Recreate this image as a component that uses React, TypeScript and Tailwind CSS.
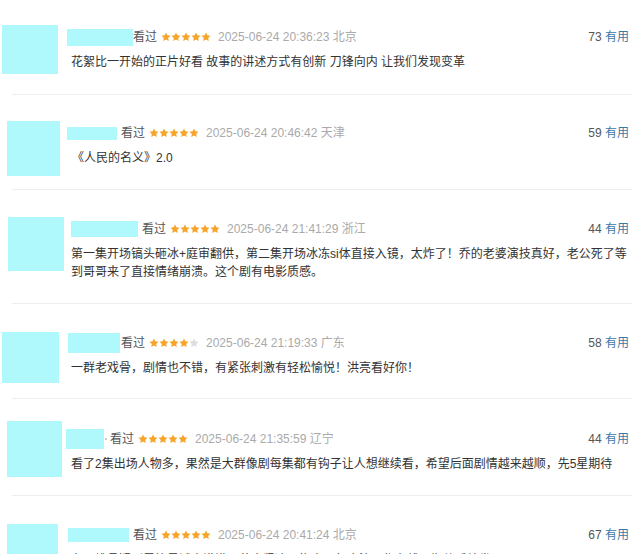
import React from 'react';

type Row = {
  rowClass: string;
  avatarClass: string;
  colClass: string;
  nameClass: string;
  gapClass: string;
  textClass: string;
  stars: number;
  time: string;
  city: string;
  useful: number;
  dot?: boolean;
  lines: string[];
};

const rows: Row[] = [
  {
    rowClass: 'h-[94px]',
    avatarClass: 'ml-[2px] mt-[25px] w-[56px] h-[49px]',
    colClass: 'ml-[9px] pt-[27px]',
    nameClass: 'w-[66px] h-[17px]',
    gapClass: 'ml-0',
    textClass: 'pl-[4px]',
    stars: 5,
    time: '2025-06-24 20:36:23',
    city: '北京',
    useful: 73,
    lines: ['花絮比一开始的正片好看 故事的讲述方式有创新 刀锋向内 让我们发现变革'],
  },
  {
    rowClass: 'h-[94px]',
    avatarClass: 'ml-[7px] mt-[26px] w-[53px] h-[55px]',
    colClass: 'ml-[7px] pt-[28px]',
    nameClass: 'w-[50px] h-[13px]',
    gapClass: 'ml-[4px]',
    textClass: 'pl-[5px]',
    stars: 5,
    time: '2025-06-24 20:46:42',
    city: '天津',
    useful: 59,
    lines: ['《人民的名义》2.0'],
  },
  {
    rowClass: 'h-[113px]',
    avatarClass: 'ml-[8px] mt-[27px] w-[56px] h-[54px]',
    colClass: 'ml-[7px] pt-[29px]',
    nameClass: 'w-[67px] h-[16px]',
    gapClass: 'ml-[4px]',
    textClass: 'pl-0',
    stars: 5,
    time: '2025-06-24 21:41:29',
    city: '浙江',
    useful: 44,
    lines: [
      '第一集开场镐头砸冰+庭审翻供，第二集开场冰冻si体直接入镜，太炸了！乔的老婆演技真好，老公死了等',
      '到哥哥来了直接情绪崩溃。这个剧有电影质感。',
    ],
  },
  {
    rowClass: 'h-[94px]',
    avatarClass: 'ml-[2px] mt-[28px] w-[57px] h-[51px]',
    colClass: 'ml-[9px] pt-[29px]',
    nameClass: 'w-[52px] h-[20px]',
    gapClass: 'ml-[1px]',
    textClass: 'pl-[3px]',
    stars: 4,
    time: '2025-06-24 21:19:33',
    city: '广东',
    useful: 58,
    lines: ['一群老戏骨，剧情也不错，有紧张刺激有轻松愉悦！洪亮看好你！'],
  },
  {
    rowClass: 'h-[96px]',
    avatarClass: 'ml-[7px] mt-[22px] w-[55px] h-[56px]',
    colClass: 'ml-[4px] pt-[30px]',
    nameClass: 'w-[38px] h-[20px]',
    gapClass: 'ml-[3px]',
    textClass: 'pl-[5px]',
    stars: 5,
    time: '2025-06-24 21:35:59',
    city: '辽宁',
    useful: 44,
    dot: true,
    lines: ['看了2集出场人物多，果然是大群像剧每集都有钩子让人想继续看，希望后面剧情越来越顺，先5星期待'],
  },
  {
    rowClass: 'h-[80px]',
    avatarClass: 'ml-[7px] mt-[28px] w-[51px] h-[40px]',
    colClass: 'ml-[10px] pt-[29px]',
    nameClass: 'w-[61px] h-[14px]',
    gapClass: 'ml-[4px]',
    textClass: 'pl-[3px]',
    stars: 5,
    time: '2025-06-24 20:41:24',
    city: '北京',
    useful: 67,
    lines: ['在一堆悬疑剧里算是诚意满满，节奏紧凑不拖沓，每个演员都在线，期待后续发展'],
  },
];

const Star: React.FC<{ on: boolean }> = ({ on }) => (
  <svg viewBox="0 0 24 24" className="w-[10px] h-[10px]">
    <path
      d="M12 1.2l3.3 6.7 7.4 1.1-5.35 5.2 1.26 7.35L12 18.1l-6.6 3.45 1.26-7.35L1.3 9l7.4-1.1z"
      fill={on ? '#f6a42a' : '#dddddd'}
    />
  </svg>
);

const Comment: React.FC<{ row: Row }> = ({ row }) => (
  <div className={`flex ${row.rowClass}`}>
    <div className={`${row.avatarClass} shrink-0 bg-[#aff8fb]`} />
    <div className={`${row.colClass} flex-1 min-w-0`}>
      <div className="flex items-center h-5 leading-5 pr-[11px]">
        <div className={`${row.nameClass} shrink-0 bg-[#aff8fb]`} />
        {row.dot && <span className="ml-[1px] w-[2px] h-[2px] rounded-full bg-[#bbbbbb]" />}
        <span className={`${row.gapClass} text-[#555555]`}>看过</span>
        <span className="ml-[4px] flex">
          {[0, 1, 2, 3, 4].map((i) => (
            <Star key={i} on={i < row.stars} />
          ))}
        </span>
        <span className="ml-[7px] text-[#aaaaaa]">
          {row.time} {row.city}
        </span>
        <span className="ml-auto text-[#555555]">
          {row.useful} <span className="text-[#3b77a8]">有用</span>
        </span>
      </div>
      <div className={`${row.textClass} mt-[6px] leading-[18px] text-[#333333]`}>
        {row.lines.map((l, i) => (
          <div key={i}>{l}</div>
        ))}
      </div>
    </div>
  </div>
);

export default function App() {
  return (
    <div
      className="w-[640px] h-[554px] overflow-hidden bg-white text-[12px]"
      style={{ fontFamily: '"Liberation Sans", "Noto Sans CJK SC", sans-serif' }}
    >
      {rows.map((r, i) => (
        <React.Fragment key={i}>
          <Comment row={r} />
          {i < rows.length - 1 && <div className="mx-[12px] mr-[8px] h-px bg-[#eeeeee]" />}
        </React.Fragment>
      ))}
    </div>
  );
}
